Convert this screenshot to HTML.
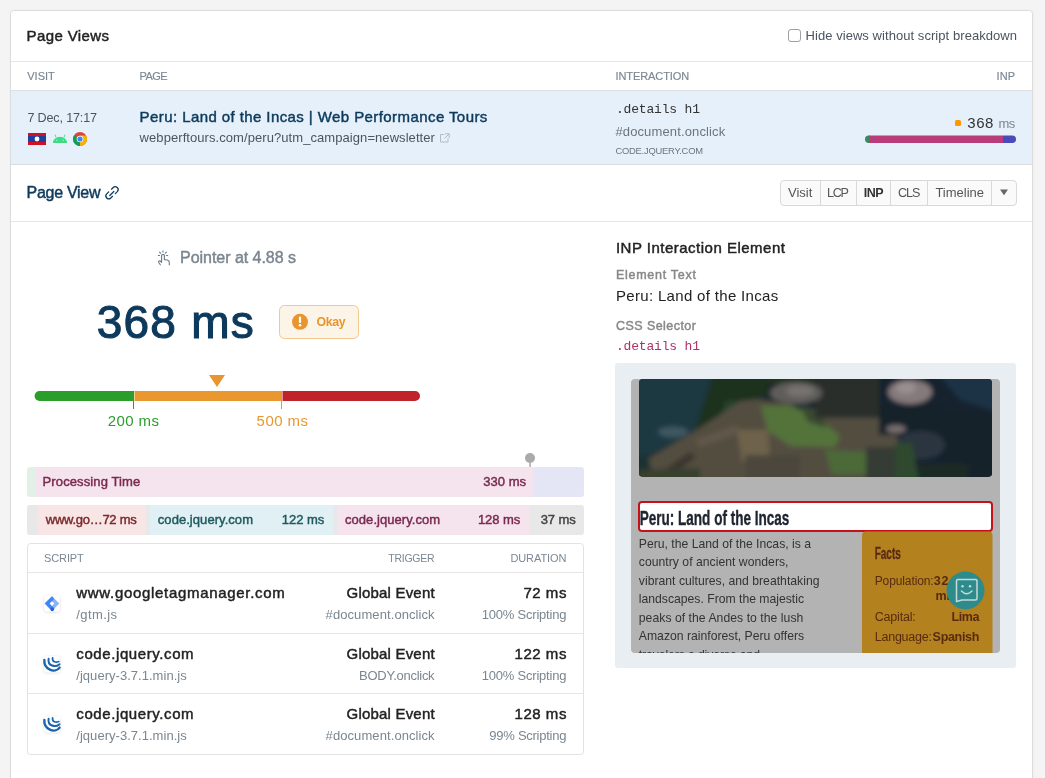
<!DOCTYPE html>
<html><head><meta charset="utf-8"><title>Page Views</title>
<style>html,body{margin:0;padding:0;background:#f4f4f4;overflow:hidden}svg{display:block;will-change:transform}</style>
</head><body>
<svg width="1045" height="778" viewBox="0 0 1045 778" font-family='"Liberation Sans", sans-serif'>
<defs><filter id="sh" x="-30%" y="-30%" width="160%" height="160%"><feDropShadow dx="0" dy="0.5" stdDeviation="0.8" flood-color="#000" flood-opacity="0.18"/></filter><filter id="csh" x="-5%" y="-5%" width="110%" height="110%"><feGaussianBlur stdDeviation="1.5"/></filter><filter id="blur"><feGaussianBlur stdDeviation="2.4"/></filter></defs>
<rect width="1045" height="778" fill="#f4f4f4"/>
<rect x="11" y="11" width="1022" height="820" rx="3" fill="#e9e9e9" filter="url(#csh)"/><rect x="10.5" y="10.5" width="1022" height="820" rx="3" fill="#fff" stroke="#dcdcdc"/>
<text x="26.5" y="41" font-size="15" fill="#222" textLength="82.5" lengthAdjust="spacing" stroke="#222" stroke-width="0.45">Page Views</text>
<rect x="788.5" y="29.5" width="12" height="12" rx="2.5" fill="#fff" stroke="#a0a0a0"/>
<text x="805.5" y="39.5" font-size="13" fill="#4a5560" textLength="211.5" lengthAdjust="spacing">Hide views without script breakdown</text>
<rect x="11" y="61" width="1021" height="1" fill="#e6e6e6"/>
<text x="27.2" y="80" font-size="11" fill="#7b8794" textLength="27.6" lengthAdjust="spacing" stroke="#7b8794" stroke-width="0.15">VISIT</text>
<text x="139.4" y="80" font-size="11" fill="#7b8794" textLength="28.3" lengthAdjust="spacing" stroke="#7b8794" stroke-width="0.15">PAGE</text>
<text x="615.4" y="80" font-size="11" fill="#7b8794" textLength="73.8" lengthAdjust="spacing" stroke="#7b8794" stroke-width="0.15">INTERACTION</text>
<text x="1015.2" y="80" font-size="11" fill="#7b8794" text-anchor="end" textLength="18.6" lengthAdjust="spacing" stroke="#7b8794" stroke-width="0.15">INP</text>
<rect x="11" y="90" width="1021" height="1" fill="#e0e0e0"/>
<rect x="11" y="91" width="1021" height="73" fill="#e6f0fa"/>
<rect x="11" y="164" width="1021" height="1" fill="#dcdcdc"/>
<text x="27.4" y="122" font-size="12.6" fill="#4a5560" textLength="69.6" lengthAdjust="spacing">7 Dec, 17:17</text>
<rect x="28" y="133" width="18" height="12" fill="#ce1126"/><rect x="28" y="136" width="18" height="6" fill="#1f3f9e"/><circle cx="37" cy="139" r="2.4" fill="#fff"/>
<path d="M53 143 A7 6.3 0 0 1 67 143 Z" fill="#3ddc84"/><path d="M56 137.3 L55 134.6 M64 137.3 L65 134.6" stroke="#3ddc84" stroke-width="0.9"/><circle cx="56.8" cy="140.3" r="0.75" fill="#a8ebc6"/><circle cx="63.2" cy="140.3" r="0.75" fill="#a8ebc6"/>
<g transform="translate(80,139)"><circle r="7" fill="#db4437"/><path d="M0 0 L-6.06 -3.5 A7 7 0 0 0 0 7 Z" fill="#0f9d58"/><path d="M0 0 L0 7 A7 7 0 0 0 6.06 -3.5 Z" fill="#f4b400"/><path d="M0 -3.5 L6.06 -3.5 L3 1.5 Z" fill="#f4b400"/><circle r="3.3" fill="#fff"/><circle r="2.6" fill="#4285f4"/></g>
<text x="139.6" y="122" font-size="15" fill="#0d3a5c" textLength="347.7" lengthAdjust="spacing" stroke="#0d3a5c" stroke-width="0.45">Peru: Land of the Incas | Web Performance Tours</text>
<text x="139.6" y="142" font-size="13" fill="#4a5560" textLength="295.3" lengthAdjust="spacing">webperftours.com/peru?utm_campaign=newsletter</text>
<path d="M444 134.5 h-3.5 v7.5 h7.5 v-3.5 M445 133.8 h4.2 v4.2 M449 134 l-4.5 4.5" fill="none" stroke="#b5bcc4" stroke-width="1"/>
<text x="616" y="113" font-size="13" fill="#333" textLength="84" lengthAdjust="spacing" font-family='"Liberation Mono", monospace'>.details h1</text>
<text x="615.4" y="136" font-size="13" fill="#6b7580" textLength="109.8" lengthAdjust="spacing">#document.onclick</text>
<text x="615.4" y="153.7" font-size="9.4" fill="#6b7580" textLength="87.6" lengthAdjust="spacing">CODE.JQUERY.COM</text>
<rect x="955" y="120" width="6" height="6" rx="1.5" fill="#ff9800"/>
<text x="967.3" y="127.5" font-size="15" fill="#333" textLength="26" lengthAdjust="spacing">368</text>
<text x="1015.2" y="127.5" font-size="13" fill="#7a8690" text-anchor="end" textLength="16.7" lengthAdjust="spacing">ms</text>
<clipPath id="inpbar"><rect x="865" y="135.5" width="151" height="7.5" rx="3.75"/></clipPath>
<g clip-path="url(#inpbar)"><rect x="865" y="135" width="5" height="9" fill="#3a8a5a"/><rect x="869" y="135" width="134" height="9" fill="#b83d7a"/><rect x="1003" y="135" width="14" height="9" fill="#4a4ab8"/></g>
<text x="26.5" y="198" font-size="16" fill="#0d3a5c" textLength="74" lengthAdjust="spacing" stroke="#0d3a5c" stroke-width="0.45">Page View</text>
<g fill="none" stroke="#0d3a5c" stroke-width="1.25" stroke-linecap="round"><path d="M111.5 189.2 L113.2 187.5 A2.9 2.9 0 0 1 117.3 191.6 L115.3 193.6"/><path d="M112.5 196.3 L110.8 198 A2.9 2.9 0 0 1 106.7 193.9 L108.7 191.9"/><path d="M109.8 195.5 L113.8 191.5"/></g>
<rect x="780.5" y="180.5" width="236" height="25" rx="3.5" fill="#fafafa" stroke="#d9d9d9"/>
<rect x="820.0" y="181" width="1" height="24" fill="#d9d9d9"/>
<rect x="856.0" y="181" width="1" height="24" fill="#d9d9d9"/>
<rect x="890.0" y="181" width="1" height="24" fill="#d9d9d9"/>
<rect x="927.0" y="181" width="1" height="24" fill="#d9d9d9"/>
<rect x="991.0" y="181" width="1" height="24" fill="#d9d9d9"/>
<text x="788" y="197" font-size="13" fill="#555" textLength="24.3" lengthAdjust="spacing">Visit</text>
<text x="827" y="197" font-size="12.6" fill="#555" textLength="22" lengthAdjust="spacing">LCP</text>
<text x="863.8" y="197" font-size="12.5" fill="#333" font-weight="700" textLength="19.9" lengthAdjust="spacing">INP</text>
<text x="898" y="197" font-size="12.6" fill="#555" textLength="22.5" lengthAdjust="spacing">CLS</text>
<text x="935.4" y="197" font-size="13" fill="#555" textLength="48.6" lengthAdjust="spacing">Timeline</text>
<path d="M1000 189.5 L1008 189.5 L1004 195.3 Z" fill="#666"/>
<rect x="11" y="221" width="1021" height="1" fill="#e6e6e6"/>
<g fill="none" stroke="#6f7d8a" stroke-width="1.15" stroke-linecap="round" stroke-linejoin="round"><path d="M160.3 264.8 L158.6 262.2 Q158.3 260.6 159.8 260.8 L161.6 262.3 V255.5 Q161.6 254.3 163 254.3 Q164.4 254.3 164.4 255.5 V259.6 L167.3 260 Q169.3 260.5 169.3 262.5 V264.8"/><path d="M158.3 255.5 h1.3 M166.4 255.5 h1.3 M159.6 252.1 l0.9 1.1 M166.4 252.1 l-0.9 1.1 M163 250.9 v1.1"/></g>
<text x="180" y="263" font-size="16" fill="#7a8690" textLength="116" lengthAdjust="spacing" stroke="#7a8690" stroke-width="0.45">Pointer at 4.88 s</text>
<text x="96.7" y="338.4" font-size="46" fill="#0d3a5c" textLength="157" lengthAdjust="spacing" stroke="#0d3a5c" stroke-width="1.1">368 ms</text>
<rect x="279.5" y="305.5" width="79" height="33" rx="5" fill="#fdf4e8" stroke="#f1c88f"/>
<circle cx="300" cy="321.8" r="8" fill="#e8952e"/><rect x="298.9" y="316.5" width="2.2" height="6.5" rx="1" fill="#fff"/><circle cx="300" cy="325.3" r="1.3" fill="#fff"/>
<text x="316.5" y="326" font-size="12.3" fill="#e8952e" font-weight="700" textLength="29.1" lengthAdjust="spacing">Okay</text>
<path d="M209 375 L225 375 L217 387 Z" fill="#e8952e"/>
<clipPath id="scale"><rect x="34.6" y="391" width="385.4" height="10" rx="5"/></clipPath>
<g clip-path="url(#scale)"><rect x="34" y="391" width="99.5" height="10" fill="#2a9d2a"/><rect x="134.5" y="391" width="146.5" height="10" fill="#e8982e"/><rect x="282.5" y="391" width="140" height="10" fill="#c0242a"/></g>
<rect x="133" y="391" width="1" height="18" fill="#2a9d2a"/><rect x="281" y="391" width="1" height="18" fill="#e8982e"/>
<text x="107.7" y="426" font-size="15" fill="#2a9d2a" textLength="51.3" lengthAdjust="spacing">200 ms</text>
<text x="256.6" y="426" font-size="15" fill="#e8982e" textLength="51.4" lengthAdjust="spacing">500 ms</text>
<circle cx="530" cy="458" r="5" fill="#aaa"/><rect x="529.3" y="462" width="1.5" height="5" fill="#aaa"/>
<clipPath id="pb1"><rect x="27" y="467" width="557" height="30" rx="3"/></clipPath>
<g clip-path="url(#pb1)"><rect x="27" y="467" width="8" height="30" fill="#e3f0e8"/><rect x="35" y="467" width="499" height="30" fill="#f5e4ee"/><rect x="534" y="467" width="50" height="30" fill="#e4e5f5"/></g>
<text x="42.6" y="486" font-size="13" fill="#7a2a50" textLength="97.6" lengthAdjust="spacing" stroke="#7a2a50" stroke-width="0.45">Processing Time</text>
<text x="526" y="486" font-size="13" fill="#7a2a50" text-anchor="end" textLength="42.7" lengthAdjust="spacing" stroke="#7a2a50" stroke-width="0.45">330 ms</text>
<clipPath id="pb2"><rect x="27" y="505" width="557" height="30" rx="3"/></clipPath>
<g clip-path="url(#pb2)"><rect x="27" y="505" width="557" height="30" fill="#e8e8e8"/><rect x="38" y="505" width="108" height="30" fill="#f8e6e6"/><rect x="150" y="505" width="183.4" height="30" fill="#e0f0f4"/><rect x="337" y="505" width="192" height="30" fill="#f5e4ee"/></g>
<text x="45.8" y="523.5" font-size="13" fill="#7a2a2a" textLength="90.9" lengthAdjust="spacing" stroke="#7a2a2a" stroke-width="0.45">www.go…72 ms</text>
<text x="157.8" y="523.5" font-size="13" fill="#1e5a5f" textLength="95.2" lengthAdjust="spacing" stroke="#1e5a5f" stroke-width="0.45">code.jquery.com</text>
<text x="324.3" y="523.5" font-size="13" fill="#1e5a5f" text-anchor="end" textLength="42.5" lengthAdjust="spacing" stroke="#1e5a5f" stroke-width="0.45">122 ms</text>
<text x="345" y="523.5" font-size="13" fill="#7a2a50" textLength="95.2" lengthAdjust="spacing" stroke="#7a2a50" stroke-width="0.45">code.jquery.com</text>
<text x="520.2" y="523.5" font-size="13" fill="#7a2a50" text-anchor="end" textLength="42.3" lengthAdjust="spacing" stroke="#7a2a50" stroke-width="0.45">128 ms</text>
<text x="575.7" y="523.5" font-size="13" fill="#444" text-anchor="end" textLength="35" lengthAdjust="spacing" stroke="#444" stroke-width="0.45">37 ms</text>
<rect x="27.5" y="543.5" width="556" height="211" rx="3" fill="#fff" stroke="#e2e2e2"/>
<text x="44.1" y="562.2" font-size="11" fill="#7b8794" textLength="39.7" lengthAdjust="spacing">SCRIPT</text>
<text x="434.6" y="562.2" font-size="10.5" fill="#7b8794" text-anchor="end" textLength="46.3" lengthAdjust="spacing">TRIGGER</text>
<text x="566.4" y="562.2" font-size="11" fill="#7b8794" text-anchor="end" textLength="56" lengthAdjust="spacing">DURATION</text>
<rect x="28" y="572" width="555" height="1" fill="#e6e6e6"/>
<rect x="28" y="633" width="555" height="1" fill="#e6e6e6"/>
<rect x="28" y="693" width="555" height="1" fill="#e6e6e6"/>
<rect x="44" y="595.6" width="16" height="16" rx="3" fill="#fff" filter="url(#sh)"/>
<g transform="translate(52,603.6)"><path d="M0 -7.3 L7.3 0 L0 7.3 L-7.3 0 Z" fill="#8ab4f8"/><path d="M0 -7.3 L-7.3 0 L0 7.3 L2.5 4.8 L-2.3 0 L2.2 -4.5 Z" fill="#4285f4"/><path d="M-2.3 0 L0 -2.3 L2.3 0 L0 2.3 Z" fill="#fff"/><circle cx="0.3" cy="5.8" r="1.8" fill="#2a63d8"/></g>
<text x="76.3" y="598.4" font-size="15" fill="#222" textLength="208.4" lengthAdjust="spacing" stroke="#222" stroke-width="0.45">www.googletagmanager.com</text>
<text x="76.3" y="619" font-size="13" fill="#7a8690" textLength="40.7" lengthAdjust="spacing">/gtm.js</text>
<text x="434.6" y="598.4" font-size="15" fill="#222" text-anchor="end" textLength="88" lengthAdjust="spacing" stroke="#222" stroke-width="0.45">Global Event</text>
<text x="434.6" y="619" font-size="13" fill="#7a8690" text-anchor="end" textLength="109" lengthAdjust="spacing">#document.onclick</text>
<text x="566.4" y="598.4" font-size="15" fill="#222" text-anchor="end" textLength="43" lengthAdjust="spacing" stroke="#222" stroke-width="0.45">72 ms</text>
<text x="566.4" y="619" font-size="13" fill="#7a8690" text-anchor="end" textLength="84.6" lengthAdjust="spacing">100% Scripting</text>
<rect x="44" y="656.2" width="16" height="16" rx="3" fill="#fff" filter="url(#sh)"/>
<g transform="translate(52,664.2)" fill="none" stroke="#1a65b0" stroke-linecap="round"><path d="M-7.6 -4.3 C-8.6 5 3 9.8 7.6 3.4" stroke-width="2.4"/><path d="M-3.4 -5.4 C-4.6 1.8 3.5 3.6 7.5 0" stroke-width="2"/><path d="M0.6 -6.4 C0 -2 4 -1.3 6.8 -2.6" stroke-width="1.7"/></g>
<text x="76.3" y="659" font-size="15" fill="#222" textLength="117.3" lengthAdjust="spacing" stroke="#222" stroke-width="0.45">code.jquery.com</text>
<text x="76.3" y="680.4" font-size="13" fill="#7a8690" textLength="110.4" lengthAdjust="spacing">/jquery-3.7.1.min.js</text>
<text x="434.6" y="659" font-size="15" fill="#222" text-anchor="end" textLength="88" lengthAdjust="spacing" stroke="#222" stroke-width="0.45">Global Event</text>
<text x="434.6" y="680.4" font-size="13" fill="#7a8690" text-anchor="end" textLength="75.5" lengthAdjust="spacing">BODY.onclick</text>
<text x="566.4" y="659" font-size="15" fill="#222" text-anchor="end" textLength="51.9" lengthAdjust="spacing" stroke="#222" stroke-width="0.45">122 ms</text>
<text x="566.4" y="680.4" font-size="13" fill="#7a8690" text-anchor="end" textLength="84.6" lengthAdjust="spacing">100% Scripting</text>
<rect x="44" y="716.2" width="16" height="16" rx="3" fill="#fff" filter="url(#sh)"/>
<g transform="translate(52,724.2)" fill="none" stroke="#1a65b0" stroke-linecap="round"><path d="M-7.6 -4.3 C-8.6 5 3 9.8 7.6 3.4" stroke-width="2.4"/><path d="M-3.4 -5.4 C-4.6 1.8 3.5 3.6 7.5 0" stroke-width="2"/><path d="M0.6 -6.4 C0 -2 4 -1.3 6.8 -2.6" stroke-width="1.7"/></g>
<text x="76.3" y="719" font-size="15" fill="#222" textLength="117.3" lengthAdjust="spacing" stroke="#222" stroke-width="0.45">code.jquery.com</text>
<text x="76.3" y="740.4" font-size="13" fill="#7a8690" textLength="110.4" lengthAdjust="spacing">/jquery-3.7.1.min.js</text>
<text x="434.6" y="719" font-size="15" fill="#222" text-anchor="end" textLength="88" lengthAdjust="spacing" stroke="#222" stroke-width="0.45">Global Event</text>
<text x="434.6" y="740.4" font-size="13" fill="#7a8690" text-anchor="end" textLength="109" lengthAdjust="spacing">#document.onclick</text>
<text x="566.4" y="719" font-size="15" fill="#222" text-anchor="end" textLength="51.9" lengthAdjust="spacing" stroke="#222" stroke-width="0.45">128 ms</text>
<text x="566.4" y="740.4" font-size="13" fill="#7a8690" text-anchor="end" textLength="77.1" lengthAdjust="spacing">99% Scripting</text>
<text x="615.9" y="253" font-size="15" fill="#222" textLength="169" lengthAdjust="spacing" stroke="#222" stroke-width="0.45">INP Interaction Element</text>
<text x="615.9" y="278.8" font-size="12.5" fill="#888" textLength="80" lengthAdjust="spacing" stroke="#888" stroke-width="0.45">Element Text</text>
<text x="615.9" y="300.8" font-size="15" fill="#222" textLength="162.3" lengthAdjust="spacing">Peru: Land of the Incas</text>
<text x="615.9" y="329.5" font-size="12.5" fill="#888" textLength="80" lengthAdjust="spacing" stroke="#888" stroke-width="0.45">CSS Selector</text>
<text x="616" y="349.6" font-size="13" fill="#b0306a" textLength="84" lengthAdjust="spacing" font-family='"Liberation Mono", monospace'>.details h1</text>
<rect x="615" y="363" width="401" height="305" rx="3" fill="#e8eef2"/>
<clipPath id="frame"><rect x="631" y="379" width="369" height="274" rx="4"/></clipPath>
<g clip-path="url(#frame)">
<rect x="631" y="379" width="369" height="274" fill="#b3b3b3"/>
<clipPath id="img"><rect x="639" y="379" width="353" height="98" rx="4"/></clipPath>
<g clip-path="url(#img)"><rect x="639" y="379" width="353" height="97" fill="#22363e"/>
<g filter="url(#blur)">
<rect x="630" y="370" width="380" height="115" fill="#17232e"/>
<path d="M630 370 L715 370 L695 431 L661 450 L639 461 L630 470 Z" fill="#1d3840"/>
<ellipse cx="673" cy="432" rx="15" ry="5.5" fill="#3e5862"/>
<path d="M695 431 L715 372 L768 372 L768 396 L741 401 Z" fill="#1f311f"/>
<path d="M727 401 L757 401 L735 433 L712 433 Z" fill="#2b4529"/>
<path d="M630 485 L639 464 L695 431 L741 401 L758 399 L790 404 L815 418 L879 418 L896 430 L900 450 L900 485 Z" fill="#524d40"/>
<path d="M737 430 L768 430 L770 464 L742 462 Z" fill="#6e624c"/>
<path d="M695 440 L737 425 L738 433 L700 447 Z" fill="#62594a"/>
<path d="M745 455 L800 455 L800 485 L745 485 Z" fill="#4c473d"/>
<path d="M655 476 L690 452 L696 457 L662 482 Z" fill="#3a362e"/>
<path d="M630 455 L648 456 L655 485 L630 485 Z" fill="#1f3030"/>
<path d="M639 470 L700 468 L700 485 L639 485 Z" fill="#38402f"/>
<path d="M761 406 L790 406 L816 416 L840 436 L835 447 L791 446 L768 431 Z" fill="#53733a"/>
<path d="M800 406 L822 410 L826 428 L808 422 Z" fill="#3a4a32"/>
<path d="M825 450 L866 452 L866 474 L832 474 Z" fill="#4b6b38"/>
<path d="M815 370 L879 370 L879 418 L815 418 Z" fill="#2a2e2c"/>
<path d="M768 370 L815 370 L815 384 L768 384 Z" fill="#22301f"/>
<ellipse cx="796" cy="393" rx="26" ry="11" fill="#5e5d5a"/><ellipse cx="800" cy="391" rx="14" ry="6" fill="#76726e"/>
<path d="M866 447 L896 447 L896 485 L866 485 Z" fill="#343a36"/>
<path d="M879 404 L942 404 L942 435 L879 435 Z" fill="#19222a"/>
<path d="M934 370 L1000 370 L1000 413 L960 400 Z" fill="#1a3244"/>
<path d="M942 413 L1000 413 L1000 485 L942 485 Z" fill="#14202c"/>
<ellipse cx="910" cy="392" rx="22" ry="12" fill="#85797b"/>
<ellipse cx="906" cy="388" rx="10" ry="6" fill="#9a8e8e"/>
<ellipse cx="896" cy="429" rx="10" ry="4" fill="#776e70"/>
<ellipse cx="921" cy="445" rx="24" ry="14" fill="#2a3640"/>
<path d="M895 443 L912 443 L920 485 L895 485 Z" fill="#2e4a2e"/>
<path d="M920 464 L968 464 L968 485 L920 485 Z" fill="#1e2a26"/>
</g></g>
<rect x="639" y="502" width="353" height="29" rx="3" fill="#fff" stroke="#c8101a" stroke-width="2"/>
<text transform="translate(639.7,524.5) scale(0.645,1)" font-size="21" font-weight="700" fill="#1e2430" stroke="#1e2430" stroke-width="0.4">Peru: Land of the Incas</text>
<text x="638.8" y="547.7" font-size="12.2" fill="#333" textLength="172.2" lengthAdjust="spacing">Peru, the Land of the Incas, is a</text>
<text x="638.8" y="566.2" font-size="12.2" fill="#333" textLength="149.7" lengthAdjust="spacing">country of ancient wonders,</text>
<text x="638.8" y="584.7" font-size="12.2" fill="#333" textLength="180.7" lengthAdjust="spacing">vibrant cultures, and breathtaking</text>
<text x="638.8" y="603.2" font-size="12.2" fill="#333" textLength="165.2" lengthAdjust="spacing">landscapes. From the majestic</text>
<text x="638.8" y="621.7" font-size="12.2" fill="#333" textLength="164.5" lengthAdjust="spacing">peaks of the Andes to the lush</text>
<text x="638.8" y="640.2" font-size="12.2" fill="#333" textLength="165.3" lengthAdjust="spacing">Amazon rainforest, Peru offers</text>
<text x="638.8" y="658.7" font-size="12.2" fill="#333" textLength="121.2" lengthAdjust="spacing">travelers a diverse and</text>
<path d="M862 535.5 Q862 531.5 866 531.5 L988.5 531.5 Q992.5 531.5 992.5 535.5 L992.5 660 L862 660 Z" fill="#b3821f"/>
<text transform="translate(874.7,558.7) scale(0.64,1)" font-size="15.6" font-weight="700" fill="#5a2a10" stroke="#5a2a10" stroke-width="0.3">Facts</text>
<text x="874.7" y="585" font-size="12" fill="#5a2a10" textLength="59" lengthAdjust="spacing">Population:</text>
<text x="933.7" y="585" font-size="12.5" fill="#5a2a10" font-weight="700" textLength="14.7" lengthAdjust="spacing">32</text>
<text x="935.4" y="599.7" font-size="12.5" fill="#5a2a10" font-weight="700">mi</text>
<text x="874.7" y="620.8" font-size="12.5" fill="#5a2a10" textLength="41.1" lengthAdjust="spacing">Capital:</text>
<text x="979.4" y="620.8" font-size="12.5" fill="#5a2a10" font-weight="700" text-anchor="end" textLength="27.8" lengthAdjust="spacing">Lima</text>
<text x="874.7" y="640.8" font-size="12.5" fill="#5a2a10" textLength="57.3" lengthAdjust="spacing">Language:</text>
<text x="979.4" y="640.8" font-size="12.5" fill="#5a2a10" font-weight="700" text-anchor="end" textLength="46.8" lengthAdjust="spacing">Spanish</text>
</g>
<circle cx="965.5" cy="590.5" r="19" fill="#2e8b8b"/>
<g fill="none" stroke="#c5d9d9" stroke-width="1.5" stroke-linecap="round" stroke-linejoin="round"><path d="M956.5 601.5 L956.5 581 Q956.5 579.5 958 579.5 L975.5 579.5 Q977 579.5 977 581 L977 598.5 Q977 600 975.5 600 L962 600 Z"/><path d="M961.5 591 Q966.5 596.5 972 591"/></g><circle cx="962.5" cy="586.3" r="1.25" fill="#c5d9d9"/><circle cx="970" cy="586.3" r="1.25" fill="#c5d9d9"/>
</svg>
</body></html>
